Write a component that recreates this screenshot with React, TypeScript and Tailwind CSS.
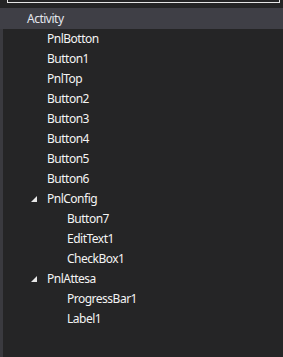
import React from "react";

type Item = { label: string; level: number; expanded?: boolean };

const items: Item[] = [
  { label: "PnlBotton", level: 1 },
  { label: "Button1", level: 1 },
  { label: "PnlTop", level: 1 },
  { label: "Button2", level: 1 },
  { label: "Button3", level: 1 },
  { label: "Button4", level: 1 },
  { label: "Button5", level: 1 },
  { label: "Button6", level: 1 },
  { label: "PnlConfig", level: 1, expanded: true },
  { label: "Button7", level: 2 },
  { label: "EditText1", level: 2 },
  { label: "CheckBox1", level: 2 },
  { label: "PnlAttesa", level: 1, expanded: true },
  { label: "ProgressBar1", level: 2 },
  { label: "Label1", level: 2 },
];

function Tri() {
  return (
    <svg width="6" height="6" viewBox="0 0 6 6" className="block">
      <polygon points="6,0 6,6 0,6" fill="#e8e8e8" />
    </svg>
  );
}

export default function App() {
  return (
    <div
      className="w-[283px] h-[357px] bg-[#252526] flex flex-col overflow-hidden text-[12px] tracking-[-0.5px] text-[#f4f4f4]"
      style={{ fontFamily: '"Segoe UI", "Noto Sans", sans-serif' }}
    >
      <div className="h-[8px] flex shrink-0">
        <div className="ml-[7px] w-[273px] h-[3px] border-l border-b border-r border-[#e6e6e6] bg-[#252526]" />
      </div>
      <div className="h-[21px] bg-[#3f3f46] flex items-center pl-[27px] shrink-0 text-[#e4e6ee]">
        Activity
      </div>
      <div className="flex flex-1">
        <div className="w-[3px] bg-[#3a3a3f]" />
        <div className="flex-1 flex flex-col">
          {items.map((it) => (
            <div key={it.label} className="h-[20px] flex items-center relative">
              {it.expanded && (
                <div className="absolute left-[28px] top-[7px]">
                  <Tri />
                </div>
              )}
              <span className={it.level === 1 ? "pl-[44px]" : "pl-[64px]"}>{it.label}</span>
            </div>
          ))}
        </div>
      </div>
    </div>
  );
}
